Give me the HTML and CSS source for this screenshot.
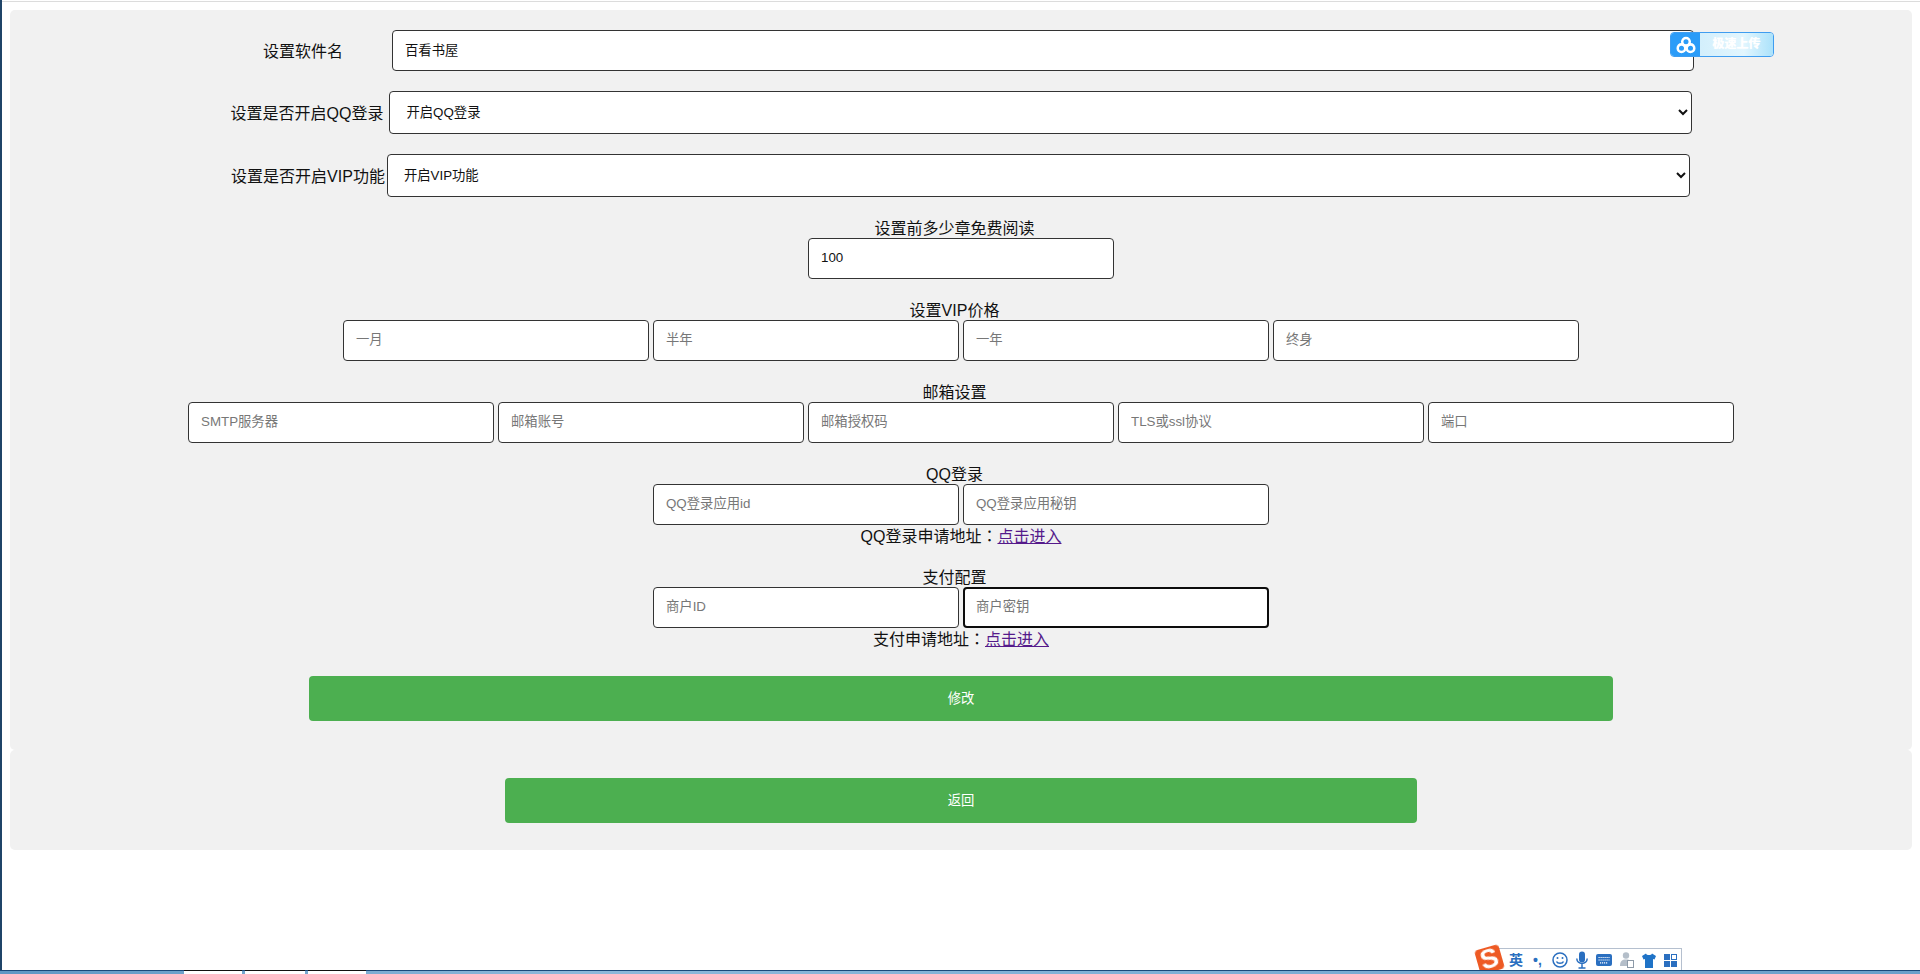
FILE: index.html
```html
<!DOCTYPE html>
<html lang="zh-CN">
<head>
<meta charset="utf-8">
<title>设置</title>
<link rel="stylesheet" href="styles.css">
</head>
<body>
<div class="top-line"></div>
<div class="left-edge"></div>
<main class="page">
  <form class="card card-main">
    <div class="row row-name">
      <label class="row-label name-label">设置软件名</label>
      <input class="field field-wide" type="text" value="百看书屋">
    </div>
    <div class="row row-qq">
      <label class="row-label">设置是否开启QQ登录</label>
      <select class="choice"><option>开启QQ登录</option></select>
    </div>
    <div class="row row-vip">
      <label class="row-label">设置是否开启VIP功能</label>
      <select class="choice"><option>开启VIP功能</option></select>
    </div>

    <section class="group">
      <div class="heading">设置前多少章免费阅读</div>
      <div class="inputs"><input class="field" type="text" value="100"></div>
    </section>
    <section class="group">
      <div class="heading">设置VIP价格</div>
      <div class="inputs">
        <input class="field" type="text" placeholder="一月">
        <input class="field" type="text" placeholder="半年">
        <input class="field" type="text" placeholder="一年">
        <input class="field" type="text" placeholder="终身">
      </div>
    </section>
    <section class="group">
      <div class="heading">邮箱设置</div>
      <div class="inputs">
        <input class="field" type="text" placeholder="SMTP服务器">
        <input class="field" type="text" placeholder="邮箱账号">
        <input class="field" type="text" placeholder="邮箱授权码">
        <input class="field" type="text" placeholder="TLS或ssl协议">
        <input class="field" type="text" placeholder="端口">
      </div>
    </section>
    <section class="group">
      <div class="heading">QQ登录</div>
      <div class="inputs">
        <input class="field" type="text" placeholder="QQ登录应用id">
        <input class="field" type="text" placeholder="QQ登录应用秘钥">
      </div>
      <div class="apply">QQ登录申请地址<span class="colon" lang="zh-TW">：</span><a class="link" href="#">点击进入</a></div>
    </section>
    <section class="group">
      <div class="heading">支付配置</div>
      <div class="inputs">
        <input class="field" type="text" placeholder="商户ID">
        <input class="field field-focus" type="text" placeholder="商户密钥">
      </div>
      <div class="apply">支付申请地址<span class="colon" lang="zh-TW">：</span><a class="link" href="#">点击进入</a></div>
    </section>
    <button class="btn btn-save" type="button">修改</button>
  </form>
  <div class="card card-back">
    <button class="btn btn-back" type="button">返回</button>
  </div>
</main>

<div class="cloud-widget">
  <span class="cloud-icon">
    <svg width="20" height="18" viewBox="0 0 22 20" fill="none" stroke="#fff" stroke-width="2.8">
      <circle cx="11" cy="6.5" r="4.200"/>
      <circle cx="6" cy="13.5" r="4.200"/>
      <circle cx="16" cy="13.5" r="4.200"/>
    </svg>
  </span>
  <span class="cloud-text"><span class="cloud-label">极速上传</span></span>
</div>

<div class="ime-bar">
  <span class="ime-logo"><span class="ime-s">S</span></span>
  <span class="ime-lang">英</span>
  <span class="ime-punct">•,</span>
  <svg class="ime-icon" width="16" height="16" viewBox="0 0 16 16" fill="none" stroke="#2a6fc0" stroke-width="1.5">
    <circle cx="8" cy="8" r="7"/>
    <circle cx="5.500" cy="6" r="1" fill="#2a6fc0" stroke="none"/>
    <circle cx="10.500" cy="6" r="1" fill="#2a6fc0" stroke="none"/>
    <path d="M4.500 9.500c1 2.400 6 2.400 7 0"/>
  </svg>
  <svg class="ime-icon" width="12" height="18" viewBox="0 0 12 18" fill="none" stroke="#2a6fc0" stroke-width="1.5">
    <rect x="3" y="0.500" width="6" height="11" rx="3" fill="#2a6fc0" stroke="none"/>
    <path d="M0.800 7.500c0 6.500 10.400 6.500 10.400 0M6 13v3.500M2.500 17h7"/>
  </svg>
  <svg class="ime-icon" width="16" height="12" viewBox="0 0 16 12">
    <rect width="16" height="12" rx="2" fill="#2a6fc0"/>
    <path d="M2.500 3.500h11M2.500 6h11M4 8.800h8" stroke="#fff" stroke-width="1.200" stroke-dasharray="1.200 .8"/>
  </svg>
  <svg class="ime-icon" width="14" height="16" viewBox="0 0 14 16">
    <circle cx="6" cy="3.500" r="3.200" fill="#b4bec9"/>
    <path d="M0 14c0-5 2-6.500 6-6.500s6 1.500 6 6.500z" fill="#b4bec9"/>
    <rect x="7.500" y="8.500" width="6" height="7" fill="#fff" stroke="#8d9aa8"/>
  </svg>
  <svg class="ime-icon" width="14" height="15" viewBox="0 0 14 15">
    <path d="M4 0.500 0 3l1.500 3.500L3 6v9h8V6l1.500.5L14 3l-4-2.500c-.5 2-5.500 2-6 0z" fill="#1f73c7"/>
  </svg>
  <svg class="ime-icon ime-icon-last" width="13" height="13" viewBox="0 0 13 13" fill="#2a6fc0">
    <rect width="6" height="6"/>
    <rect x="7.500" y=".5" width="5" height="5" fill="#fff" stroke="#2a6fc0"/>
    <rect y="7" width="6" height="6"/>
    <rect x="7" y="7" width="6" height="6"/>
  </svg>
</div>

<div class="taskbar">
  <span class="task-tab task-one"></span>
  <span class="task-tab task-two"></span>
  <span class="task-tab task-three"></span>
</div>
</body>
</html>
```

FILE: styles.css
```css
* {
  box-sizing: border-box;
}

html,
body {
  margin: 0;
  height: 100%;
  background: #fff;
  overflow: hidden;
}

body {
  font-family: "Liberation Sans", "Noto Sans CJK SC", sans-serif;
  font-size: 16px;
  color: #111;
}

.page {
  padding: 10px 8px 0 10px;
}

.card {
  background: #f1f1f1;
  border-radius: 5px;
}

.card-main {
  height: 740px;
  padding-top: 20px;
}

.card-back {
  height: 100px;
  padding-top: 28px;
}

.row {
  display: flex;
  justify-content: center;
  align-items: center;
}

.row-label {
  padding-bottom: 2px;
}

.row-name {
  margin-bottom: 20px;
}

.name-label {
  width: 150px;
  margin-right: 14px;
  text-align: center;
}

.row-qq {
  margin-bottom: 20px;
  gap: 6px;
  padding-left: 1px;
}

.row-vip {
  margin-bottom: 21px;
  gap: 2px;
  padding-right: 1px;
}

.group {
  margin-bottom: 21px;
  text-align: center;
}

.heading {
  height: 20px;
  padding-top: 1px;
  padding-right: 13px;
  line-height: 20px;
}

.inputs {
  display: flex;
  justify-content: center;
  gap: 4px;
}

.field {
  width: 306px;
  height: 41px;
  padding: 0 12px 2px;
  border: 1px solid #333;
  border-radius: 4px;
  background: #fff;
  color: #111;
  font-family: inherit;
  font-size: 13.33px;
}

.field::placeholder {
  color: #777;
}

.field-wide {
  width: 1302px;
}

.field-focus {
  border: 2px solid #0c0c0c;
  padding: 0 11px 2px;
}

.choice {
  width: 1303px;
  height: 43px;
  padding: 0 12px 1px;
  border: 1px solid #333;
  border-radius: 4px;
  background: #fff;
  color: #111;
  font-family: inherit;
  font-size: 13.33px;
}

.apply {
  height: 21px;
  line-height: 21px;
}

.colon {
  font-family: "Noto Sans CJK TC", sans-serif;
}

.link {
  color: #551a8b;
}

.btn {
  display: block;
  height: 45px;
  margin: 0 auto;
  padding-bottom: 3px;
  border: 0;
  border-radius: 4px;
  background: #4caf50;
  color: #fff;
  font-family: inherit;
  font-size: 13.33px;
}

.btn-save {
  width: 1304px;
  margin-top: 27px;
}

.btn-back {
  width: 912px;
}

.top-line {
  position: fixed;
  top: 1px;
  left: 0;
  right: 0;
  height: 1px;
  background: #dcdcdc;
}

.left-edge {
  position: fixed;
  top: 0;
  bottom: 0;
  left: 0;
  width: 2px;
  background: #1f4468;
}

.cloud-widget {
  position: fixed;
  top: 32px;
  left: 1670px;
  display: flex;
  width: 104px;
  height: 25px;
  border: 1px solid #3f9df0;
  border-radius: 4px;
  overflow: hidden;
}

.cloud-icon {
  display: flex;
  align-items: center;
  justify-content: center;
  width: 29px;
  background: #2b9cf8;
}

.cloud-text {
  flex: 1;
  background: linear-gradient(90deg, #d3effc, #e2f6fe 60%, #abe2fb);
  font-size: 12px;
  font-weight: 700;
  line-height: 23px;
  text-align: center;
}

.cloud-label {
  color: #fff;
  text-shadow: 0 0 1px #fff;
}

.ime-bar {
  position: fixed;
  top: 948px;
  left: 1490px;
  display: flex;
  align-items: center;
  width: 192px;
  height: 23px;
  padding-left: 19px;
  border: 1px solid #b5c0cf;
  border-bottom: 0;
  border-left: 0;
  background: #fff;
}

.ime-logo {
  position: absolute;
  top: -2px;
  left: -13px;
  display: flex;
  align-items: center;
  justify-content: center;
  width: 25px;
  height: 25px;
  border-radius: 4px;
  background: #ee5a24;
  transform: rotate(-16deg);
}

.ime-s {
  color: #fff;
  font-size: 27px;
  font-weight: 700;
  line-height: 25px;
}

.ime-lang {
  flex: none;
  width: 14px;
  color: #2a6fc0;
  font-size: 14px;
  font-weight: 700;
  line-height: 20px;
}

.ime-punct {
  flex: none;
  width: 29px;
  padding-left: 10px;
  color: #2a6fc0;
  font-size: 14px;
  font-weight: 700;
  line-height: 20px;
}

.ime-icon {
  flex: none;
  margin-right: 8px;
}

.ime-icon-last {
  margin-right: 0;
}

.taskbar {
  position: fixed;
  left: 0;
  right: 0;
  bottom: 0;
  display: block;
  height: 4px;
  border-top: 1px solid #1b4a7a;
  background: linear-gradient(90deg, #5f97c4, #8db8da 30%, #7fb0d6 60%, #6a9fca);
}

.task-tab {
  position: absolute;
  top: -1px;
  height: 4px;
  border-top: 1px solid #111;
  background: #fff;
}

.task-one {
  left: 184px;
  width: 58px;
}

.task-two {
  left: 245px;
  width: 60px;
}

.task-three {
  left: 308px;
  width: 58px;
}
```
